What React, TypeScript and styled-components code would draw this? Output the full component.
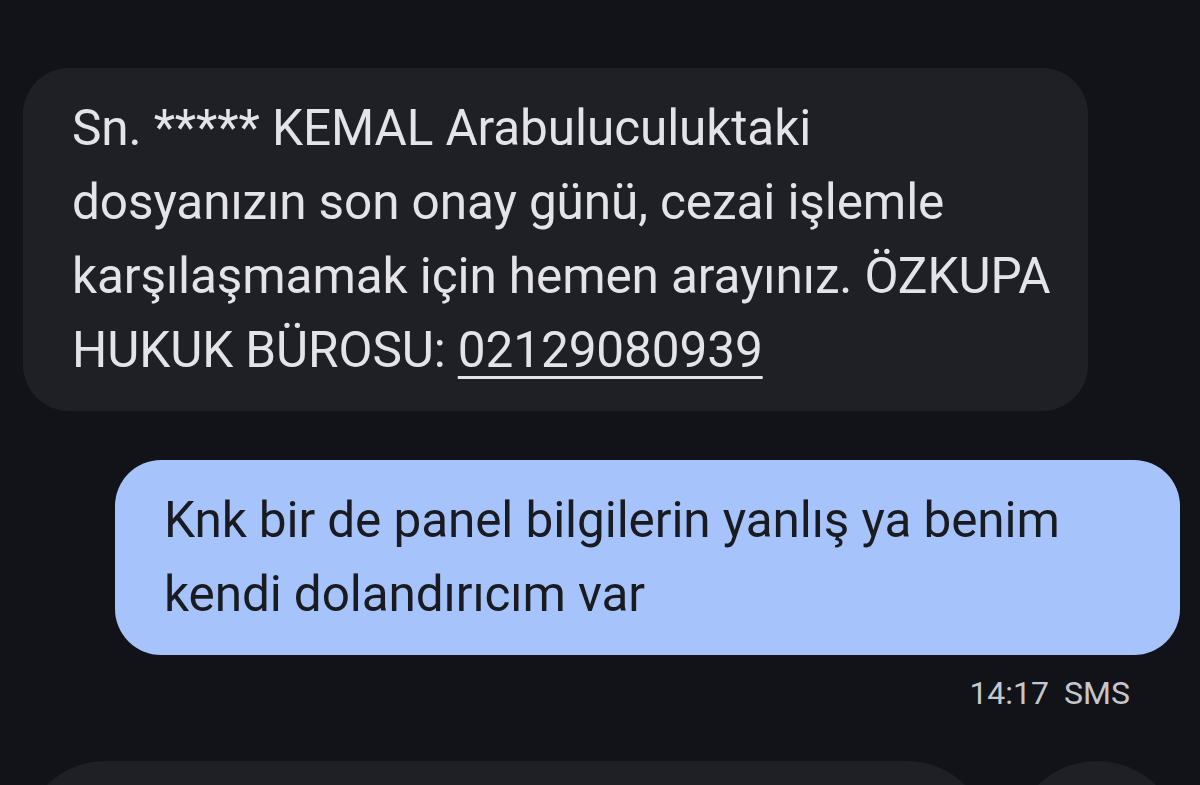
import React from "react";
import styled, { createGlobalStyle } from "styled-components";

const Global = createGlobalStyle`
  html, body { margin: 0; padding: 0; background: #121318; }
  body { font-family: Roboto, "Noto Sans", sans-serif; overflow: hidden; }
`;

const Screen = styled.div`
  width: 1200px;
  height: 785px;
  overflow: hidden;
  background: #121318;
  display: flex;
  flex-direction: column;
`;

const ClippedHeader = styled.div`
  height: 6px;
  overflow: hidden;
  display: flex;
  align-items: flex-end;
  justify-content: center;
  padding-left: 380px;
`;

const HeaderText = styled.div`
  font-size: 32px;
  line-height: 40px;
  color: #c5c6cc;
  white-space: nowrap;
  transform: translateY(-3px);
`;

const Row = styled.div<{ $out?: boolean }>`
  display: flex;
  justify-content: ${(p) => (p.$out ? "flex-end" : "flex-start")};
  padding: ${(p) => (p.$out ? "0 20px 0 0" : "0 0 0 23px")};
`;

const Bubble = styled.div<{ $out?: boolean }>`
  width: 1065px;
  box-sizing: border-box;
  border-radius: 46px;
  padding: 23px 30px 24px 49px;
  background: ${(p) => (p.$out ? "#a6c4fb" : "#1f2025")};
  color: ${(p) => (p.$out ? "#191b21" : "#e3e3e8")};
  font-size: 49.5px;
  line-height: 74px;
  letter-spacing: -0.1px;
`;

const Line = styled.div`
  white-space: nowrap;
`;

const Phone = styled.span`
  text-decoration: underline;
  text-decoration-thickness: 3px;
  text-underline-offset: 9px;
`;

const Meta = styled.div`
  display: flex;
  justify-content: flex-end;
  gap: 15px;
  padding: 16px 70px 0 0;
  font-size: 32px;
  line-height: 44px;
  color: #c6c7cd;
`;

const BottomRow = styled.div`
  display: flex;
  gap: 23px;
  padding-left: 23px;
  margin-top: 46px;
`;

const PartialBubble = styled.div<{ $w: number; $r: number }>`
  width: ${(p) => p.$w}px;
  height: 200px;
  flex: none;
  border-radius: ${(p) => p.$r}px;
  background: #1f2025;
`;

export default function App() {
  return (
    <>
      <Global />
      <Screen>
        <ClippedHeader>
          <HeaderText>Bu kişiyle yazışıyor (SMS/MMS),</HeaderText>
        </ClippedHeader>
        <Row style={{ marginTop: 68 }}>
          <Bubble>
            <Line>Sn. ***** KEMAL Arabuluculuktaki</Line>
            <Line>dosyanızın son onay günü, cezai işlemle</Line>
            <Line>karşılaşmamak için hemen arayınız. ÖZKUPA</Line>
            <Line>
              HUKUK BÜROSU: <Phone>02129080939</Phone>
            </Line>
          </Bubble>
        </Row>
        <Row $out style={{ marginTop: 49 }}>
          <Bubble $out>
            <Line>Knk bir de panel bilgilerin yanlış ya benim</Line>
            <Line>kendi dolandırıcım var</Line>
          </Bubble>
        </Row>
        <Meta>
          <span>14:17</span>
          <span>SMS</span>
        </Meta>
        <BottomRow>
          <PartialBubble $w={966} $r={82} />
          <PartialBubble $w={170} $r={85} />
        </BottomRow>
      </Screen>
    </>
  );
}
